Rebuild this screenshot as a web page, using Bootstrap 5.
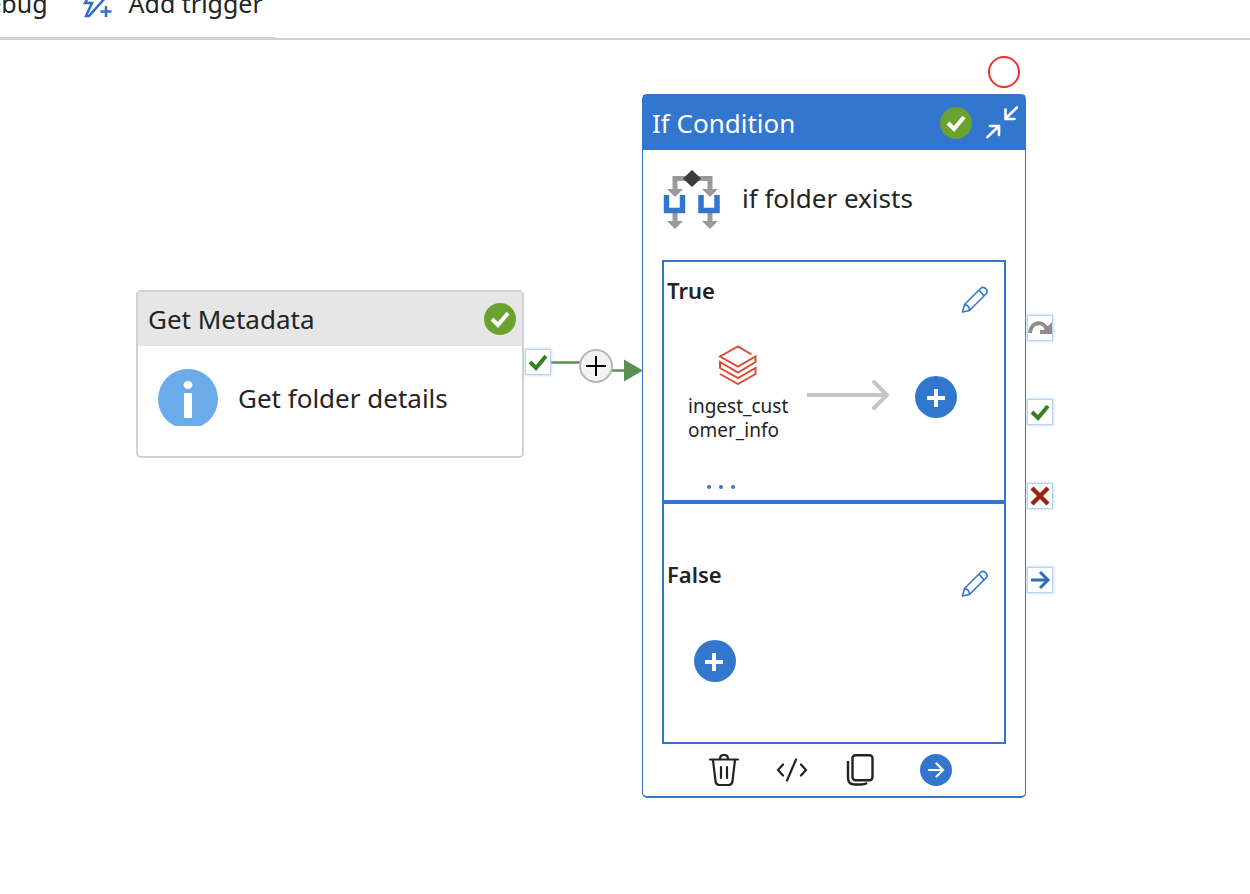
<!DOCTYPE html>
<html lang="en">
<head>
<meta charset="utf-8">
<meta name="viewport" content="width=device-width, initial-scale=1">
<title>Pipeline canvas</title>
<link href="https://cdn.jsdelivr.net/npm/bootstrap@5.3.0/dist/css/bootstrap.min.css" rel="stylesheet">
<style>
  :root { --accent: #3276ce; --ink: #242424; }
  body { font-family: "Noto Sans", sans-serif; color: var(--ink); background: #fff; font-size: 26px; line-height: 36px; }
  svg { display: block; flex: none; }
  .icon-btn { padding: 0; border: 0; background: none; color: inherit; display: block; flex: none; }

  /* Toolbar, scrolled partly out of view */
  .toolbar { height: 40px; border-bottom: 2px solid #d1d1d1; }
  .tools { width: 276px; height: 38px; border-bottom: 1px solid #d1d1d1; overflow: hidden; }
  .tool-btn { font-size: 25px; line-height: 32px; white-space: nowrap; }
  .tools-row { margin: -13px 0 0 -31px; gap: 33px; }

  /* Canvas */
  .canvas { min-height: calc(100vh - 40px); overflow: hidden; }
  .node { position: absolute; background: #fff; border-radius: 5px; }
  .node-meta { left: 136px; top: 250px; width: 388px; height: 168px; border: 2px solid #d1d1d1; }
  .node-meta .node-head { background: #e6e6e6; height: 54px; padding: 0 6px 0 10px; }
  .node-meta .node-main { padding: 23px 20px 0; gap: 20px; }
  .node-if { left: 642px; top: 54px; width: 384px; border: 1px solid var(--accent); border-bottom-width: 2px; }
  .node-if .node-head { background: var(--accent); color: #fff; height: 55px; padding: 0 7px 0 9px; gap: 14px; }
  .node-if .node-main { padding: 20px 20px 0; gap: 20px; height: 110px; }
  .node-if .node-main span { padding-top: 10px; }

  .branches { margin: 0 19px; border: 2px solid var(--accent); }
  .branch { height: 238px; padding-right: 16px; }
  .branch + .branch { height: 242px; border-top: 4px solid var(--accent); padding-top: 42px; }
  .branch h3 { font-size: 22px; font-weight: 600; line-height: 32px; margin: 0; padding: 12px 0 0 3px; }
  .branch-head { height: 83px; }
  .branch-head .icon-btn { margin-top: 24px; color: var(--accent); }
  .activity { width: 102px; margin-left: 24px; font-size: 19px; line-height: 24px; }
  .activity svg { margin-left: 30px; }
  .activity span { word-break: break-all; margin-top: 9px; }
  .flow-arrow { margin: 24px 26px 0 17px; }
  .add-btn { width: 42px; height: 42px; border-radius: 50%; background: var(--accent); color: #fff; }
  .add-next { margin-top: 31px; }
  .add-first { margin: 11px 0 0 30px; }
  .more-btn { margin: 15px 0 0 39px; }
  .actions { height: 52px; padding-left: 66px; gap: 37px; }

  .port { width: 26px; height: 26px; background: #fff; border: 1px solid #b9d3f5; box-shadow: 0 0 3px #a9c9f3; }
  .port-out { position: absolute; left: 525px; top: 309px; }
  .ports { position: absolute; left: 100%; top: 220px; padding-left: 2px; gap: 58px; }
  .link-line { position: absolute; left: 551px; top: 305px; }
  .add-step { position: absolute; left: 579px; top: 309px; width: 34px; height: 34px; border-radius: 50%; background: #f3f3f3; border: 2px solid #b9b9b9; }
  .breakpoint { position: absolute; left: 988px; top: 16px; width: 32px; height: 32px; border: 2px solid #e8352b; border-radius: 50%; }
</style>
</head>
<body>
<header class="toolbar">
  <div class="tools">
    <div class="tools-row d-flex align-items-center">
      <button class="icon-btn tool-btn" type="button">Debug</button>
      <button class="icon-btn tool-btn d-flex align-items-center" type="button">
        <svg class="me-3" width="32" height="32" viewBox="0 0 32 32" fill="none" stroke="#326fc4" stroke-width="2.500"><path d="M12 2 4 16h7L5 29h3L25 10h-9l5-9M25 19v11M19.500 24.500h11" /></svg>
        Add trigger
      </button>
    </div>
  </div>
</header>

<main class="canvas position-relative">
  <section class="node node-meta">
    <div class="node-head d-flex align-items-center justify-content-between">
      <span>Get Metadata</span>
      <svg width="32" height="32" viewBox="0 0 32 32"><circle cx="16" cy="16" r="16" fill="#6ba22f"/><path d="m8 16 6 6 10-12" fill="none" stroke="#fff" stroke-width="4"/></svg>
    </div>
    <div class="node-main d-flex align-items-center">
      <svg width="60" height="57" viewBox="0 0 60 57"><circle cx="30" cy="30" r="30" fill="#6aabea"/><ellipse cx="30" cy="16" rx="4.500" ry="4" fill="#fff"/><rect x="26" y="24" width="8" height="25" rx="1" fill="#fff"/></svg>
      <span>Get folder details</span>
    </div>
  </section>

  <svg class="link-line" width="92" height="40" viewBox="0 0 92 40"><path d="M0 17.500h30M60 25.500h14" stroke="#5a8f58" stroke-width="2.500"/><path d="M73 14.500v22l19-11z" fill="#5a8f58"/></svg>
  <button class="icon-btn port port-out" type="button" aria-label="On success">
    <svg width="24" height="24" viewBox="0 0 24 24" fill="none" stroke="#358023" stroke-width="4"><path d="m4 12 6 6L20 6"/></svg>
  </button>
  <button class="icon-btn add-step" type="button" aria-label="Add step">
    <svg width="30" height="30" viewBox="0 0 30 30" stroke="#000" stroke-width="2"><path d="M15 5v20M5 15h20"/></svg>
  </button>

  <button class="icon-btn breakpoint" type="button" aria-label="Breakpoint"></button>

  <section class="node node-if">
    <div class="node-head d-flex align-items-center">
      <span class="me-auto">If Condition</span>
      <svg width="32" height="32" viewBox="0 0 32 32"><circle cx="16" cy="16" r="16" fill="#6ba22f"/><path d="m8 16 6 6 10-12" fill="none" stroke="#fff" stroke-width="4"/></svg>
      <button class="icon-btn" type="button" aria-label="Collapse">
        <svg width="32" height="34" viewBox="0 0 32 34" fill="none" stroke="#fff" stroke-width="2.600" stroke-linecap="round"><path d="M31 1.500 20 12M19.500 3.500v9.500h9M1.500 31l11-10.500M4 20h9v9"/></svg>
      </button>
    </div>
    <div class="node-main d-flex align-items-start">
      <svg width="59" height="60" viewBox="0 0 59 60">
        <path d="M12 20V8.500h35V20M12 42v10M47 42v10" fill="none" stroke="#999" stroke-width="5"/>
        <path d="M4 19h16l-8 8zM39 19h16l-8 8zM4 51h16l-8 8zM39 51h16l-8 8z" fill="#999"/>
        <path d="M3.500 25v15.500h16V25M38 25v15.500h16V25" fill="none" stroke="var(--accent)" stroke-width="5.500"/>
        <path d="m29 0 9 8.500-9 8.500-9-8.500z" fill="#3b3b3b"/>
      </svg>
      <span>if folder exists</span>
    </div>

    <div class="branches">
      <div class="branch">
        <div class="branch-head d-flex justify-content-between align-items-start">
          <h3>True</h3>
          <button class="icon-btn" type="button" aria-label="Edit true branch">
            <svg width="27" height="28" viewBox="0 0 27 28" fill="none" stroke="currentColor" stroke-width="1.600" stroke-linejoin="round"><path d="M1.500 26 3.500 18.500 19.500 2.500Q22.500 0 25 3t-.500 5.500L8.500 24.500zM18 4l5 6M3.500 18.500q5 1 5 6"/></svg>
          </button>
        </div>
        <div class="d-flex align-items-start">
          <div class="activity d-flex flex-column">
            <svg width="40" height="40" viewBox="0 0 40 40" fill="none" stroke="#dc4d37" stroke-width="2"><path d="M33.500 9.500 20 1.500 2 11.500 20 21.500 37.500 11.500V17L20 27.500 2 17v6L20 33 37.500 23v6L20 39 2 29"/></svg>
            <span>ingest_customer_info</span>
          </div>
          <svg class="flow-arrow" width="82" height="52" viewBox="0 0 82 52" fill="none" stroke="#c8c6c4" stroke-width="4"><path d="M0 26h80"/><path d="m67 13 13 13-13 13" stroke-linecap="round"/></svg>
          <button class="icon-btn add-btn add-next" type="button" aria-label="Add activity to true branch">
            <svg width="42" height="42" viewBox="0 0 42 42" stroke="#fff" stroke-width="4"><path d="M21 13v18M12 22h18"/></svg>
          </button>
        </div>
        <button class="icon-btn more-btn" type="button" aria-label="More activities">
          <svg width="40" height="36" viewBox="0 0 40 36" fill="var(--accent)"><circle cx="6" cy="30" r="2"/><circle cx="18" cy="30" r="2"/><circle cx="30" cy="30" r="2"/></svg>
        </button>
      </div>
      <div class="branch">
        <div class="branch-head d-flex justify-content-between align-items-start">
          <h3>False</h3>
          <button class="icon-btn" type="button" aria-label="Edit false branch">
            <svg width="27" height="28" viewBox="0 0 27 28" fill="none" stroke="currentColor" stroke-width="1.600" stroke-linejoin="round"><path d="M1.500 26 3.500 18.500 19.500 2.500Q22.500 0 25 3t-.500 5.500L8.500 24.500zM18 4l5 6M3.500 18.500q5 1 5 6"/></svg>
          </button>
        </div>
        <button class="icon-btn add-btn add-first" type="button" aria-label="Add activity to false branch">
          <svg width="42" height="42" viewBox="0 0 42 42" stroke="#fff" stroke-width="4"><path d="M20 13v18M11 22h18"/></svg>
        </button>
      </div>
    </div>

    <div class="actions d-flex align-items-center">
      <button class="icon-btn" type="button" aria-label="Delete">
        <svg width="30" height="32" viewBox="0 0 30 32" fill="none" stroke="#222" stroke-width="2.200" stroke-linecap="round"><path d="M1 5.500h28M11 5q0-4 4-4t4 4M4 6l2.500 21q.500 4 4 4h9q3.500 0 4-4L26 6M12 13v11M18 13v11"/></svg>
      </button>
      <button class="icon-btn" type="button" aria-label="View code">
        <svg width="32" height="32" viewBox="0 0 32 32" fill="none" stroke="#222" stroke-width="2.200" stroke-linecap="round"><path d="m7 10.500-5 5.500 5 5.500M25 10.500l5 5.500-5 5.500M20 5.500l-9 21"/></svg>
      </button>
      <button class="icon-btn" type="button" aria-label="Clone">
        <svg width="30" height="32" viewBox="0 0 30 32" fill="none" stroke="#222" stroke-width="2.400"><rect x="7.500" y="1.200" width="20" height="25" rx="3"/><path d="M3 7v17q0 6.500 7 6.500h6q4 0 6-1.500"/></svg>
      </button>
      <button class="icon-btn ms-2" type="button" aria-label="Open output">
        <svg width="32" height="32" viewBox="0 0 32 32" fill="none" stroke="#fff" stroke-width="2.200" stroke-linecap="round"><circle cx="16" cy="16" r="16" fill="var(--accent)" stroke="none"/><path d="M9 16h14M16.500 9.500 23 16l-6.500 6.500"/></svg>
      </button>
    </div>

    <div class="ports d-flex flex-column">
      <button class="icon-btn port" type="button" aria-label="On skip">
        <svg width="24" height="24" viewBox="0 0 24 24" fill="none" stroke="#8d8d8d" stroke-width="4"><path d="M2 17C3 5 16 4 19 14"/><path d="M24 6v12H12v-4h4l5-5z" fill="#8d8d8d" stroke="none"/></svg>
      </button>
      <button class="icon-btn port" type="button" aria-label="On success">
        <svg width="24" height="24" viewBox="0 0 24 24" fill="none" stroke="#358023" stroke-width="4"><path d="m4 12 6 6L20 6"/></svg>
      </button>
      <button class="icon-btn port" type="button" aria-label="On failure">
        <svg width="24" height="24" viewBox="0 0 24 24" stroke="#a11f15" stroke-width="4.400"><path d="m4 4 16 16M20 4 4 20"/></svg>
      </button>
      <button class="icon-btn port" type="button" aria-label="On completion">
        <svg width="24" height="24" viewBox="0 0 24 24" fill="none" stroke="#2f6cb8" stroke-width="3"><path d="M3 12h17M12 4l8 8-8 8"/></svg>
      </button>
    </div>
  </section>
</main>
<script src="https://cdn.jsdelivr.net/npm/bootstrap@5.3.0/dist/js/bootstrap.bundle.min.js"></script>
</body>
</html>
